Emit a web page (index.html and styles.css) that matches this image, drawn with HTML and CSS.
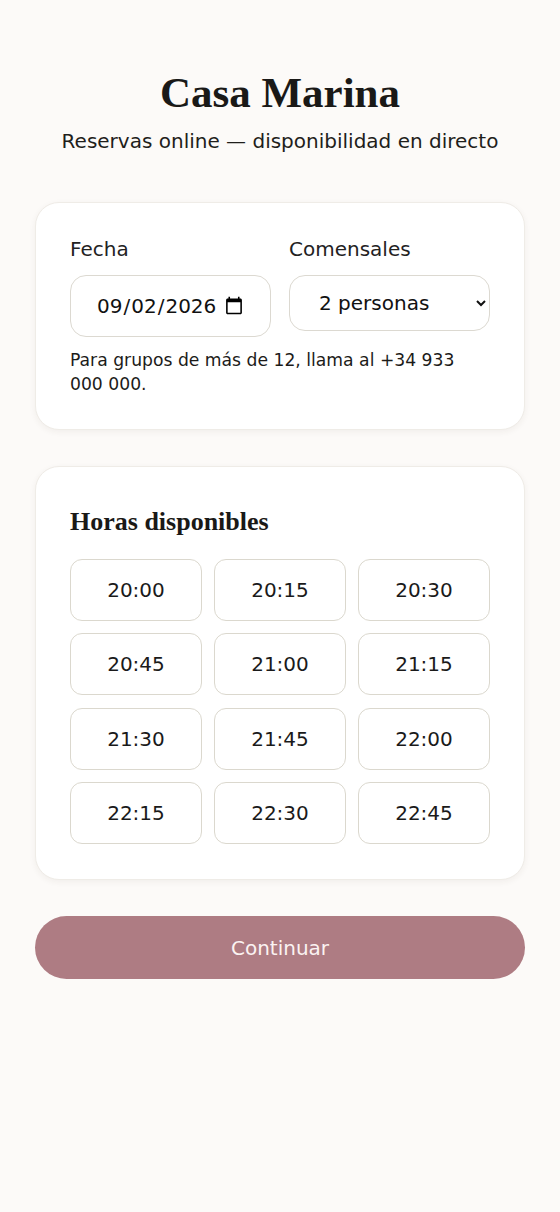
FILE: index.html
```html
<!DOCTYPE html>
<html lang="es">
<head>
<meta charset="utf-8">
<title>Casa Marina — Reservas</title>
<link rel="stylesheet" href="styles.css">
</head>
<body>
<main class="page">
  <header class="header">
    <h1 class="title">Casa Marina</h1>
    <p class="subtitle">Reservas online — disponibilidad en directo</p>
  </header>

  <section class="card card-form">
    <div class="fields">
      <label class="field">
        <span class="field-label">Fecha</span>
        <input class="date-input" type="date" value="2026-09-02">
      </label>
      <label class="field">
        <span class="field-label">Comensales</span>
        <select class="select-input">
          <option>1 persona</option>
          <option selected>2 personas</option>
          <option>3 personas</option>
          <option>4 personas</option>
        </select>
      </label>
    </div>
    <p class="note">Para grupos de más de 12, llama al +34 933 000 000.</p>
  </section>

  <section class="card card-times">
    <h2 class="section-title">Horas disponibles</h2>
    <div class="times">
      <button class="time">20:00</button>
      <button class="time">20:15</button>
      <button class="time">20:30</button>
      <button class="time">20:45</button>
      <button class="time">21:00</button>
      <button class="time">21:15</button>
      <button class="time">21:30</button>
      <button class="time">21:45</button>
      <button class="time">22:00</button>
      <button class="time">22:15</button>
      <button class="time">22:30</button>
      <button class="time">22:45</button>
    </div>
  </section>

  <button class="continue">Continuar</button>
</main>
</body>
</html>
```

FILE: styles.css
```css
* { box-sizing: border-box; }

html, body {
  margin: 0;
  background: #fcfaf8;
  color: #1c1b19;
  font-family: "DejaVu Sans", sans-serif;
}

.page {
  width: 490px;
  margin: 0 auto;
  padding-top: 67px;
}

.header { text-align: center; }

.title {
  margin: 0;
  font-family: "Liberation Serif", serif;
  font-weight: bold;
  font-size: 43px;
  line-height: 1.2;
  color: #1a1917;
}

.subtitle {
  margin: 8px 0 0;
  font-size: 20px;
  line-height: 28px;
  color: #1f1e1b;
}

.card {
  background: #ffffff;
  border: 1px solid #efece7;
  border-radius: 24px;
  box-shadow: 0 2px 6px rgba(60, 50, 40, 0.06);
  padding: 34px 34px;
}

.card-form {
  margin-top: 47px;
  padding-bottom: 33px;
}

.fields {
  display: grid;
  grid-template-columns: repeat(2, minmax(0, 1fr));
  column-gap: 18px;
  align-items: start;
}

.field {
  display: flex;
  flex-direction: column;
  min-width: 0;
}

.field-label {
  font-size: 20px;
  line-height: 24px;
  margin-bottom: 14px;
  color: #23221f;
}

.date-input,
.select-input {
  font-family: "DejaVu Sans", sans-serif;
  font-size: 20px;
  color: #111;
  background: #fff;
  border: 1.5px solid #dcd9d1;
  border-radius: 16px;
  width: 100%;
  min-width: 0;
}

.date-input {
  height: 62px;
  padding: 0 24px 0 25px;
}

.select-input {
  height: 56px;
  padding: 0 8px 0 25px;
}

.note {
  margin: 11px 0 0;
  font-size: 17.2px;
  line-height: 24px;
  color: #1c1b19;
}

.card-times {
  margin-top: 36px;
  padding-top: 35px;
  padding-bottom: 35px;
}

.section-title {
  margin: 0;
  font-family: "Liberation Serif", serif;
  font-weight: bold;
  font-size: 26px;
  line-height: 31px;
  color: #1a1917;
  padding-top: 4px;
}

.times {
  margin-top: 22px;
  display: grid;
  grid-template-columns: repeat(3, 1fr);
  gap: 12.6px 12px;
}

.time {
  height: 62px;
  background: #fff;
  border: 1.5px solid #dbd8ce;
  border-radius: 12px;
  font-family: "DejaVu Sans", sans-serif;
  font-size: 20px;
  color: #1a1a1a;
}

.continue {
  display: block;
  width: 100%;
  height: 63px;
  margin-top: 36px;
  border: none;
  border-radius: 32px;
  background: #ae7c83;
  color: #fbf3f2;
  font-family: "DejaVu Sans", sans-serif;
  font-size: 20px;
}
```
